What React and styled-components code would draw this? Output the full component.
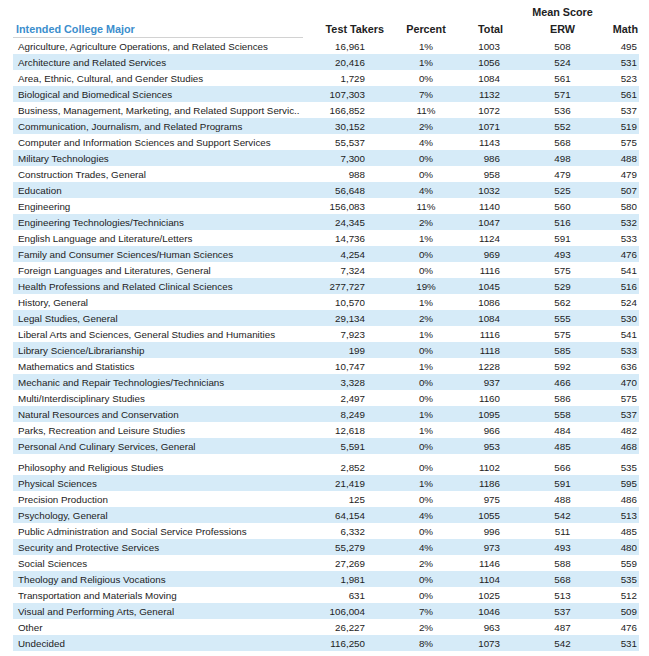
import React from "react";
import styled, { createGlobalStyle } from "styled-components";

const GlobalStyle = createGlobalStyle`
  body {
    margin: 0;
    background: #ffffff;
    font-family: "Liberation Sans", Arial, sans-serif;
    color: #1c1c1c;
  }
`;

const rows = [
  ["Agriculture, Agriculture Operations, and Related Sciences", "16,961", "1%", "1003", "508", "495"],
  ["Architecture and Related Services", "20,416", "1%", "1056", "524", "531"],
  ["Area, Ethnic, Cultural, and Gender Studies", "1,729", "0%", "1084", "561", "523"],
  ["Biological and Biomedical Sciences", "107,303", "7%", "1132", "571", "561"],
  ["Business, Management, Marketing, and Related Support Servic..", "166,852", "11%", "1072", "536", "537"],
  ["Communication, Journalism, and Related Programs", "30,152", "2%", "1071", "552", "519"],
  ["Computer and Information Sciences and Support Services", "55,537", "4%", "1143", "568", "575"],
  ["Military Technologies", "7,300", "0%", "986", "498", "488"],
  ["Construction Trades, General", "988", "0%", "958", "479", "479"],
  ["Education", "56,648", "4%", "1032", "525", "507"],
  ["Engineering", "156,083", "11%", "1140", "560", "580"],
  ["Engineering Technologies/Technicians", "24,345", "2%", "1047", "516", "532"],
  ["English Language and Literature/Letters", "14,736", "1%", "1124", "591", "533"],
  ["Family and Consumer Sciences/Human Sciences", "4,254", "0%", "969", "493", "476"],
  ["Foreign Languages and Literatures, General", "7,324", "0%", "1116", "575", "541"],
  ["Health Professions and Related Clinical Sciences", "277,727", "19%", "1045", "529", "516"],
  ["History, General", "10,570", "1%", "1086", "562", "524"],
  ["Legal Studies, General", "29,134", "2%", "1084", "555", "530"],
  ["Liberal Arts and Sciences, General Studies and Humanities", "7,923", "1%", "1116", "575", "541"],
  ["Library Science/Librarianship", "199", "0%", "1118", "585", "533"],
  ["Mathematics and Statistics", "10,747", "1%", "1228", "592", "636"],
  ["Mechanic and Repair Technologies/Technicians", "3,328", "0%", "937", "466", "470"],
  ["Multi/Interdisciplinary Studies", "2,497", "0%", "1160", "586", "575"],
  ["Natural Resources and Conservation", "8,249", "1%", "1095", "558", "537"],
  ["Parks, Recreation and Leisure Studies", "12,618", "1%", "966", "484", "482"],
  ["Personal And Culinary Services, General", "5,591", "0%", "953", "485", "468"],
  ["Philosophy and Religious Studies", "2,852", "0%", "1102", "566", "535"],
  ["Physical Sciences", "21,419", "1%", "1186", "591", "595"],
  ["Precision Production", "125", "0%", "975", "488", "486"],
  ["Psychology, General", "64,154", "4%", "1055", "542", "513"],
  ["Public Administration and Social Service Professions", "6,332", "0%", "996", "511", "485"],
  ["Security and Protective Services", "55,279", "4%", "973", "493", "480"],
  ["Social Sciences", "27,269", "2%", "1146", "588", "559"],
  ["Theology and Religious Vocations", "1,981", "0%", "1104", "568", "535"],
  ["Transportation and Materials Moving", "631", "0%", "1025", "513", "512"],
  ["Visual and Performing Arts, General", "106,004", "7%", "1046", "537", "509"],
  ["Other", "26,227", "2%", "963", "487", "476"],
  ["Undecided", "116,250", "8%", "1073", "542", "531"],
];

const columns = "307px 72px 68px 55px 95px 29px";

const Table = styled.div`
  margin: 4px 0 0 13px;
  width: 626px;
  font-size: 9.8px;
`;

const Row = styled.div`
  display: grid;
  grid-template-columns: ${columns};
  height: 16px;
  align-items: center;
  background: ${(p) => (p.$striped ? "#d6ebf8" : "transparent")};
  margin-top: ${(p) => (p.$gap ? "5px" : "0")};
`;

const HeadRow = styled(Row)`
  font-weight: bold;
  font-size: 10.8px;
  color: #222;
`;

const LabelRow = styled(HeadRow)`
  height: 18px;
`;

const Cell = styled.div`
  white-space: nowrap;
  text-align: ${(p) => p.$align || "left"};
  padding-right: ${(p) => p.$pr || 0}px;
  padding-left: ${(p) => p.$pl || 0}px;
`;

const MajorHead = styled(Cell)`
  color: #3b8ecd;
  padding-left: 3px;
  height: 16px;
  line-height: 16px;
  border-bottom: 1px solid #d2d2d2;
  margin-right: 17px;
  margin-top: 1px;
`;

const bodyCols = [
  { align: "right", pr: 27 },
  { align: "center" },
  { align: "right", pr: 15 },
  { align: "center" },
  { align: "right", pr: 2 },
];

export default function App() {
  return (
    <>
      <GlobalStyle />
      <Table>
        <HeadRow>
          <Cell />
          <Cell />
          <Cell />
          <Cell />
          <Cell $align="center">Mean Score</Cell>
          <Cell />
        </HeadRow>
        <LabelRow>
          <MajorHead>Intended College Major</MajorHead>
          <Cell $align="right" $pr={8}>Test Takers</Cell>
          <Cell $align="center">Percent</Cell>
          <Cell $align="right" $pr={12}>Total</Cell>
          <Cell $align="center">ERW</Cell>
          <Cell $align="right" $pr={1}>Math</Cell>
        </LabelRow>
        {rows.map((r, i) => (
          <Row key={r[0]} $striped={i % 2 === 1} $gap={i === 26}>
            <Cell $pl={5}>{r[0]}</Cell>
            {r.slice(1).map((v, j) => (
              <Cell key={j} $align={bodyCols[j].align} $pr={bodyCols[j].pr}>
                {v}
              </Cell>
            ))}
          </Row>
        ))}
      </Table>
    </>
  );
}
